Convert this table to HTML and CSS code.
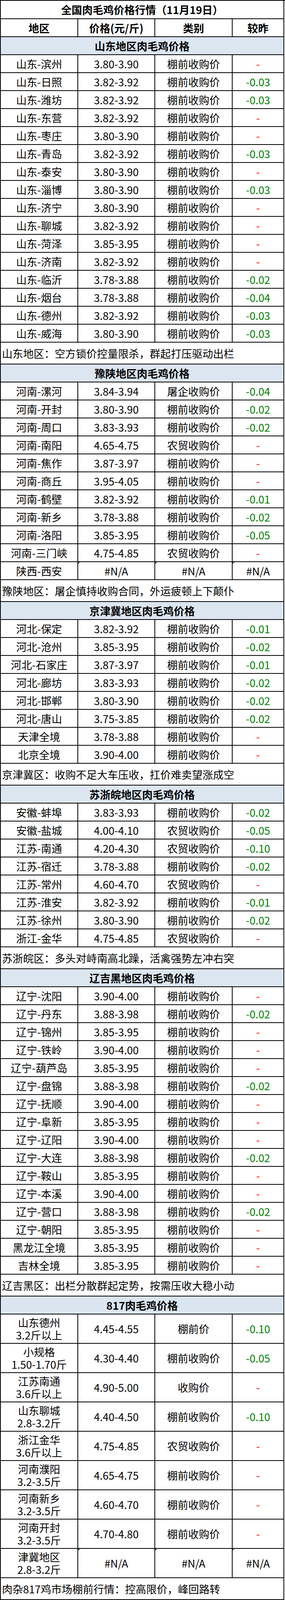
FILE: index.html
```html
<!DOCTYPE html>
<html lang="zh-CN">
<head>
<meta charset="utf-8">
<title>全国肉毛鸡价格行情</title>
<link rel="stylesheet" href="styles.css">
</head>
<body>
<div class="sheet">
  <div class="row title"><div class="c span">全国肉毛鸡价格行情（11月19日）</div></div>
  <div class="row head"><div class="c">地区</div><div class="c">价格(元/斤)</div><div class="c">类别</div><div class="c">较昨</div></div>

  <div class="row sec"><div class="c span">山东地区肉毛鸡价格</div></div>
  <div class="row"><div class="c">山东-滨州</div><div class="c">3.80-3.90</div><div class="c">棚前收购价</div><div class="c r">-</div></div>
  <div class="row"><div class="c">山东-日照</div><div class="c">3.82-3.92</div><div class="c">棚前收购价</div><div class="c g">-0.03</div></div>
  <div class="row"><div class="c">山东-潍坊</div><div class="c">3.82-3.92</div><div class="c">棚前收购价</div><div class="c g">-0.03</div></div>
  <div class="row"><div class="c">山东-东营</div><div class="c">3.82-3.92</div><div class="c">棚前收购价</div><div class="c r">-</div></div>
  <div class="row"><div class="c">山东-枣庄</div><div class="c">3.80-3.90</div><div class="c">棚前收购价</div><div class="c r">-</div></div>
  <div class="row"><div class="c">山东-青岛</div><div class="c">3.82-3.92</div><div class="c">棚前收购价</div><div class="c g">-0.03</div></div>
  <div class="row"><div class="c">山东-泰安</div><div class="c">3.80-3.90</div><div class="c">棚前收购价</div><div class="c r">-</div></div>
  <div class="row"><div class="c">山东-淄博</div><div class="c">3.80-3.90</div><div class="c">棚前收购价</div><div class="c g">-0.03</div></div>
  <div class="row"><div class="c">山东-济宁</div><div class="c">3.80-3.90</div><div class="c">棚前收购价</div><div class="c r">-</div></div>
  <div class="row"><div class="c">山东-聊城</div><div class="c">3.82-3.92</div><div class="c">棚前收购价</div><div class="c r">-</div></div>
  <div class="row"><div class="c">山东-菏泽</div><div class="c">3.85-3.95</div><div class="c">棚前收购价</div><div class="c r">-</div></div>
  <div class="row"><div class="c">山东-济南</div><div class="c">3.82-3.92</div><div class="c">棚前收购价</div><div class="c r">-</div></div>
  <div class="row"><div class="c">山东-临沂</div><div class="c">3.78-3.88</div><div class="c">棚前收购价</div><div class="c g">-0.02</div></div>
  <div class="row"><div class="c">山东-烟台</div><div class="c">3.78-3.88</div><div class="c">棚前收购价</div><div class="c g">-0.04</div></div>
  <div class="row"><div class="c">山东-德州</div><div class="c">3.82-3.92</div><div class="c">棚前收购价</div><div class="c g">-0.03</div></div>
  <div class="row"><div class="c">山东-威海</div><div class="c">3.80-3.90</div><div class="c">棚前收购价</div><div class="c g">-0.03</div></div>
  <div class="row note"><div class="c span">山东地区：空方锁价控量限杀，群起打压驱动出栏</div></div>

  <div class="row sec"><div class="c span">豫陕地区肉毛鸡价格</div></div>
  <div class="row"><div class="c">河南-漯河</div><div class="c">3.84-3.94</div><div class="c">屠企收购价</div><div class="c g">-0.04</div></div>
  <div class="row"><div class="c">河南-开封</div><div class="c">3.80-3.90</div><div class="c">棚前收购价</div><div class="c g">-0.02</div></div>
  <div class="row"><div class="c">河南-周口</div><div class="c">3.83-3.93</div><div class="c">棚前收购价</div><div class="c g">-0.02</div></div>
  <div class="row"><div class="c">河南-南阳</div><div class="c">4.65-4.75</div><div class="c">农贸收购价</div><div class="c r">-</div></div>
  <div class="row"><div class="c">河南-焦作</div><div class="c">3.87-3.97</div><div class="c">棚前收购价</div><div class="c r">-</div></div>
  <div class="row"><div class="c">河南-商丘</div><div class="c">3.95-4.05</div><div class="c">棚前收购价</div><div class="c r">-</div></div>
  <div class="row"><div class="c">河南-鹤壁</div><div class="c">3.82-3.92</div><div class="c">棚前收购价</div><div class="c g">-0.01</div></div>
  <div class="row"><div class="c">河南-新乡</div><div class="c">3.78-3.88</div><div class="c">棚前收购价</div><div class="c g">-0.02</div></div>
  <div class="row"><div class="c">河南-洛阳</div><div class="c">3.85-3.95</div><div class="c">棚前收购价</div><div class="c g">-0.05</div></div>
  <div class="row"><div class="c">河南-三门峡</div><div class="c">4.75-4.85</div><div class="c">农贸收购价</div><div class="c r">-</div></div>
  <div class="row"><div class="c">陕西-西安</div><div class="c na">#N/A</div><div class="c na">#N/A</div><div class="c na">#N/A</div></div>
  <div class="row note"><div class="c span">豫陕地区：屠企慎持收购合同，外运疲顿上下颠仆</div></div>

  <div class="row sec"><div class="c span">京津冀地区肉毛鸡价格</div></div>
  <div class="row"><div class="c">河北-保定</div><div class="c">3.82-3.92</div><div class="c">棚前收购价</div><div class="c g">-0.01</div></div>
  <div class="row"><div class="c">河北-沧州</div><div class="c">3.85-3.95</div><div class="c">棚前收购价</div><div class="c g">-0.02</div></div>
  <div class="row"><div class="c">河北-石家庄</div><div class="c">3.87-3.97</div><div class="c">棚前收购价</div><div class="c g">-0.01</div></div>
  <div class="row"><div class="c">河北-廊坊</div><div class="c">3.83-3.93</div><div class="c">棚前收购价</div><div class="c g">-0.02</div></div>
  <div class="row"><div class="c">河北-邯郸</div><div class="c">3.80-3.90</div><div class="c">棚前收购价</div><div class="c g">-0.02</div></div>
  <div class="row"><div class="c">河北-唐山</div><div class="c">3.75-3.85</div><div class="c">棚前收购价</div><div class="c g">-0.02</div></div>
  <div class="row"><div class="c">天津全境</div><div class="c">3.78-3.88</div><div class="c">棚前收购价</div><div class="c r">-</div></div>
  <div class="row"><div class="c">北京全境</div><div class="c">3.90-4.00</div><div class="c">棚前收购价</div><div class="c r">-</div></div>
  <div class="row note"><div class="c span">京津冀区：收购不足大车压收，扛价难卖望涨成空</div></div>

  <div class="row sec"><div class="c span">苏浙皖地区肉毛鸡价格</div></div>
  <div class="row"><div class="c">安徽-蚌埠</div><div class="c">3.83-3.93</div><div class="c">棚前收购价</div><div class="c g">-0.02</div></div>
  <div class="row"><div class="c">安徽-盐城</div><div class="c">4.00-4.10</div><div class="c">农贸收购价</div><div class="c g">-0.05</div></div>
  <div class="row"><div class="c">江苏-南通</div><div class="c">4.20-4.30</div><div class="c">农贸收购价</div><div class="c g">-0.10</div></div>
  <div class="row"><div class="c">江苏-宿迁</div><div class="c">3.78-3.88</div><div class="c">棚前收购价</div><div class="c g">-0.02</div></div>
  <div class="row"><div class="c">江苏-常州</div><div class="c">4.60-4.70</div><div class="c">农贸收购价</div><div class="c r">-</div></div>
  <div class="row"><div class="c">江苏-淮安</div><div class="c">3.82-3.92</div><div class="c">棚前收购价</div><div class="c g">-0.01</div></div>
  <div class="row"><div class="c">江苏-徐州</div><div class="c">3.80-3.90</div><div class="c">棚前收购价</div><div class="c g">-0.02</div></div>
  <div class="row"><div class="c">浙江-金华</div><div class="c">4.75-4.85</div><div class="c">农贸收购价</div><div class="c r">-</div></div>
  <div class="row note"><div class="c span">苏浙皖区：多头对峙南高北躁，活禽强势左冲右突</div></div>

  <div class="row sec"><div class="c span">辽吉黑地区肉毛鸡价格</div></div>
  <div class="row"><div class="c">辽宁-沈阳</div><div class="c">3.90-4.00</div><div class="c">棚前收购价</div><div class="c r">-</div></div>
  <div class="row"><div class="c">辽宁-丹东</div><div class="c">3.88-3.98</div><div class="c">棚前收购价</div><div class="c g">-0.02</div></div>
  <div class="row"><div class="c">辽宁-锦州</div><div class="c">3.85-3.95</div><div class="c">棚前收购价</div><div class="c r">-</div></div>
  <div class="row"><div class="c">辽宁-铁岭</div><div class="c">3.90-4.00</div><div class="c">棚前收购价</div><div class="c r">-</div></div>
  <div class="row"><div class="c">辽宁-葫芦岛</div><div class="c">3.85-3.95</div><div class="c">棚前收购价</div><div class="c r">-</div></div>
  <div class="row"><div class="c">辽宁-盘锦</div><div class="c">3.88-3.98</div><div class="c">棚前收购价</div><div class="c g">-0.02</div></div>
  <div class="row"><div class="c">辽宁-抚顺</div><div class="c">3.90-4.00</div><div class="c">棚前收购价</div><div class="c r">-</div></div>
  <div class="row"><div class="c">辽宁-阜新</div><div class="c">3.85-3.95</div><div class="c">棚前收购价</div><div class="c r">-</div></div>
  <div class="row"><div class="c">辽宁-辽阳</div><div class="c">3.90-4.00</div><div class="c">棚前收购价</div><div class="c r">-</div></div>
  <div class="row"><div class="c">辽宁-大连</div><div class="c">3.88-3.98</div><div class="c">棚前收购价</div><div class="c g">-0.02</div></div>
  <div class="row"><div class="c">辽宁-鞍山</div><div class="c">3.85-3.95</div><div class="c">棚前收购价</div><div class="c r">-</div></div>
  <div class="row"><div class="c">辽宁-本溪</div><div class="c">3.90-4.00</div><div class="c">棚前收购价</div><div class="c r">-</div></div>
  <div class="row"><div class="c">辽宁-营口</div><div class="c">3.88-3.98</div><div class="c">棚前收购价</div><div class="c g">-0.02</div></div>
  <div class="row"><div class="c">辽宁-朝阳</div><div class="c">3.85-3.95</div><div class="c">棚前收购价</div><div class="c r">-</div></div>
  <div class="row"><div class="c">黑龙江全境</div><div class="c">3.85-3.95</div><div class="c">棚前收购价</div><div class="c r">-</div></div>
  <div class="row"><div class="c">吉林全境</div><div class="c">3.85-3.95</div><div class="c">棚前收购价</div><div class="c r">-</div></div>
  <div class="row note"><div class="c span">辽吉黑区：出栏分散群起定势，按需压收大稳小动</div></div>

  <div class="row sec"><div class="c span">817肉毛鸡价格</div></div>
  <div class="row tall"><div class="c">山东德州<br>3.2斤以上</div><div class="c">4.45-4.55</div><div class="c">棚前价</div><div class="c g">-0.10</div></div>
  <div class="row tall"><div class="c">小规格<br>1.50-1.70斤</div><div class="c">4.30-4.40</div><div class="c">棚前收购价</div><div class="c g">-0.05</div></div>
  <div class="row tall"><div class="c">江苏南通<br>3.6斤以上</div><div class="c">4.90-5.00</div><div class="c">收购价</div><div class="c r">-</div></div>
  <div class="row tall"><div class="c">山东聊城<br>2.8-3.2斤</div><div class="c">4.40-4.50</div><div class="c">棚前收购价</div><div class="c g">-0.10</div></div>
  <div class="row tall"><div class="c">浙江金华<br>3.6斤以上</div><div class="c">4.75-4.85</div><div class="c">农贸收购价</div><div class="c r">-</div></div>
  <div class="row tall"><div class="c">河南濮阳<br>3.2-3.5斤</div><div class="c">4.65-4.75</div><div class="c">棚前收购价</div><div class="c r">-</div></div>
  <div class="row tall"><div class="c">河南新乡<br>3.2-3.5斤</div><div class="c">4.60-4.70</div><div class="c">棚前收购价</div><div class="c r">-</div></div>
  <div class="row tall"><div class="c">河南开封<br>3.2-3.5斤</div><div class="c">4.70-4.80</div><div class="c">棚前收购价</div><div class="c r">-</div></div>
  <div class="row tall"><div class="c">津冀地区<br>2.8-3.2斤</div><div class="c na">#N/A</div><div class="c na">#N/A</div><div class="c na">#N/A</div></div>
  <div class="row note"><div class="c span">肉杂817鸡市场棚前行情：控高限价，峰回路转</div></div>
</div>
</body>
</html>
```

FILE: styles.css
```css
html, body {
  margin: 0;
  padding: 0;
  background: #ffffff;
}

.sheet {
  width: 729px;
  box-sizing: border-box;
  border-top: 2px solid #000;
  border-left: 2px solid #000;
  font-family: "Noto Sans CJK SC", "Noto Sans", sans-serif;
  font-size: 27px;
  color: #000;
}

.row {
  display: grid;
  grid-template-columns: 198px 197px 198px 132px;
  height: 46px;
}

.c {
  position: relative;
  box-sizing: border-box;
  border-right: 2px solid #000;
  border-bottom: 2px solid #000;
  display: flex;
  align-items: center;
  justify-content: center;
  text-align: center;
  white-space: nowrap;
  line-height: 1;
}

.span {
  grid-column: 1 / -1;
}

.title {
  height: 47px;
}

.title .c,
.head .c,
.sec .c {
  font-weight: 700;
}

.sec .c {
  background: #dce6f1;
}

.note {
  height: 56px;
}

.note .c {
  justify-content: flex-start;
  padding-left: 3px;
}

.tall {
  height: 75px;
}

.tall .c {
  line-height: 32px;
}

.g {
  color: #008000;
}

.r {
  color: #ff0000;
}

.na::before {
  content: "";
  position: absolute;
  top: 0;
  left: 0;
  border-top: 5px solid #1f8a1f;
  border-right: 5px solid transparent;
}
```
